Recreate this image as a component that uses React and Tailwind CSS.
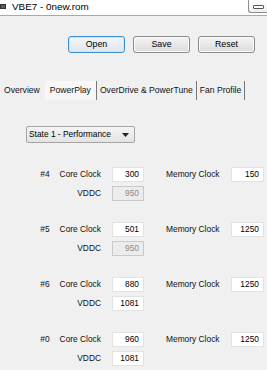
import React from "react";

const font = { fontFamily: '"Liberation Sans", Arial, sans-serif' };

function Btn({ children, primary }) {
  return (
    <div
      className={
        "w-[57px] h-[17px] rounded-[3px] border flex items-center justify-center text-[8.8px] text-black " +
        (primary
          ? "border-[#3c8fd0] bg-gradient-to-b from-[#f2f6f9] to-[#dfe6ec] shadow-[inset_0_0_0_1px_#c9e7f8]"
          : "border-[#8a8a8a] bg-gradient-to-b from-[#f4f4f4] to-[#dcdcdc] shadow-[inset_0_0_0_1px_#fbfbfb]")
      }
    >
      {children}
    </div>
  );
}

function Box({ value, disabled, w = "w-[32px]" }) {
  return (
    <div
      className={
        w +
        " h-[15px] border flex items-center justify-end pr-[4px] text-[8.4px] " +
        (disabled
          ? "bg-[#ececec] border-[#c9c9c9] text-[#8a8a8a]"
          : "bg-white border-[#e2e2e2] text-black")
      }
    >
      {value}
    </div>
  );
}

function Block({ id, core, mem, vddc, vdis }) {
  return (
    <div className="flex flex-col gap-[4px]">
      <div className="flex items-center">
        <div className="w-[101px] flex justify-end gap-[10px]">
          <span>{id}</span>
          <span>Core Clock</span>
        </div>
        <div className="ml-[11px]">
          <Box value={core} />
        </div>
        <span className="ml-[22px] w-[65px]">Memory Clock</span>
        <Box value={mem} w="w-[33px]" />
      </div>
      <div className="flex items-center">
        <div className="w-[101px] flex justify-end">
          <span>VDDC</span>
        </div>
        <div className="ml-[11px]">
          <Box value={vddc} disabled={vdis} />
        </div>
      </div>
    </div>
  );
}

export default function App() {
  return (
    <div
      className="w-[267px] h-[370px] bg-[#f0f0f0] overflow-hidden text-[8.4px] text-[#111]"
      style={font}
    >
      {/* title bar */}
      <div className="h-[16px] bg-white border-b border-[#a9a9a9] flex items-start relative">
        <div className="w-[6px] h-[5px] mt-[4px] bg-[#5a5a5a] border border-[#333]" />
        <span className="ml-[6px] mt-[1px] text-[9.9px] text-black leading-[12px]">
          VBE7 - 0new.rom
        </span>
        <div className="absolute right-0 top-0 w-[19px] h-[13px] border-l border-b border-[#8e8e8e] rounded-bl-[3px] bg-gradient-to-b from-white to-[#eeeeee] flex items-center justify-center">
          <div className="w-[11px] h-[4px] border border-[#555] rounded-[1px] bg-white mt-[1px]" />
        </div>
      </div>

      {/* buttons */}
      <div className="flex justify-end gap-[8px] pr-[12px] mt-[20px]">
        <Btn primary>Open</Btn>
        <Btn>Save</Btn>
        <Btn>Reset</Btn>
      </div>

      {/* tabs */}
      <div className="flex items-stretch mt-[28px] h-[19px] pl-[1px] text-[8.6px]">
        <div className="px-[3px] flex items-center">Overview</div>
        <div className="ml-[2px] px-[5px] flex items-center bg-[#f7f7f7] border-r border-[#777]">
          PowerPlay
        </div>
        <div className="px-[3px] flex items-center border-r border-[#777]">
          OverDrive &amp; PowerTune
        </div>
        <div className="px-[3px] flex items-center border-r border-[#777]">Fan Profile</div>
      </div>

      {/* dropdown */}
      <div className="ml-[26px] mt-[26px] w-[109px] h-[17px] border border-[#a5a5a5] rounded-[2px] bg-gradient-to-b from-[#f5f5f5] to-[#e3e3e3] flex items-center pl-[2px] text-black">
        <span className="flex-1">State 1 - Performance</span>
        <svg width="7" height="4" viewBox="0 0 7 4" className="mr-[5px]">
          <path d="M0 0 H7 L3.5 4 Z" fill="#222" />
        </svg>
      </div>

      {/* rows */}
      <div className="mt-[24px] flex flex-col gap-[21px]">
        <Block id="#4" core="300" mem="150" vddc="950" vdis />
        <Block id="#5" core="501" mem="1250" vddc="950" vdis />
        <Block id="#6" core="880" mem="1250" vddc="1081" />
        <Block id="#0" core="960" mem="1250" vddc="1081" />
      </div>
    </div>
  );
}
